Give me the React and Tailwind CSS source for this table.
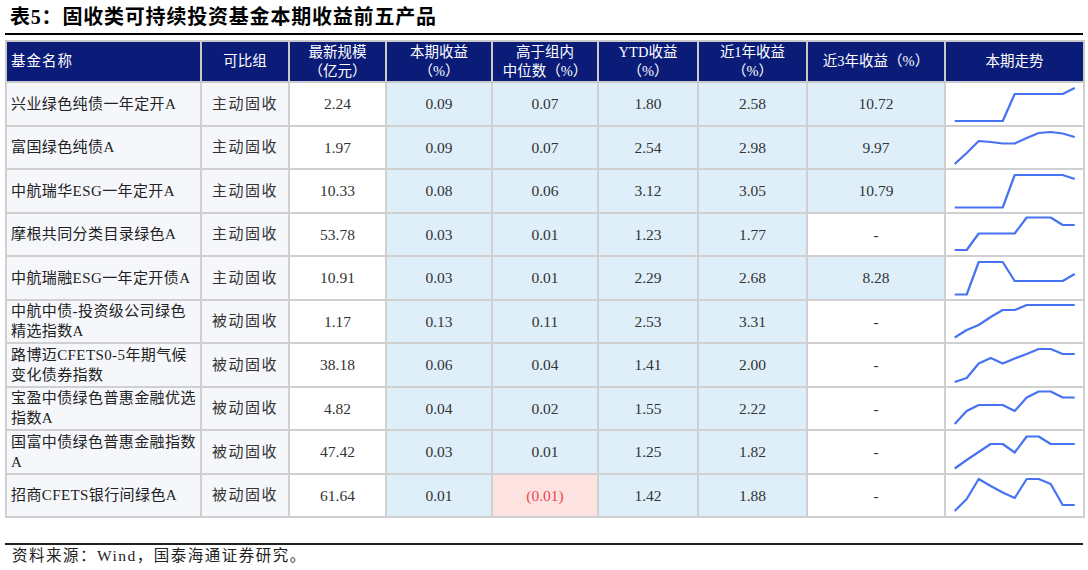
const serif = { fontFamily: '"Liberation Serif", "Noto Sans CJK SC", serif' };

const rows = [
  { name: "兴业绿色纯债一年定开A", group: "主动固收", size: "2.24", cur: "0.09", med: "0.07", ytd: "1.80", y1: "2.58", y3: "10.72", line: [38, 38, 38, 38, 38, 11, 11, 11, 11, 11, 5] },
  { name: "富国绿色纯债A", group: "主动固收", size: "1.97", cur: "0.09", med: "0.07", ytd: "2.54", y1: "2.98", y3: "9.97", line: [38, 27, 15, 16, 17.5, 17.5, 12, 7, 6, 7.5, 11] },
  { name: "中航瑞华ESG一年定开A", group: "主动固收", size: "10.33", cur: "0.08", med: "0.06", ytd: "3.12", y1: "3.05", y3: "10.79", line: [37.5, 37.5, 37.5, 37.5, 37.5, 5, 5, 5, 5, 5, 9] },
  { name: "摩根共同分类目录绿色A", group: "主动固收", size: "53.78", cur: "0.03", med: "0.01", ytd: "1.23", y1: "1.77", y3: "-", line: [37, 37, 20.5, 20.5, 20.5, 20.5, 4.5, 4.5, 4.5, 12, 12] },
  { name: "中航瑞融ESG一年定开债A", group: "主动固收", size: "10.91", cur: "0.03", med: "0.01", ytd: "2.29", y1: "2.68", y3: "8.28", line: [37.5, 37.5, 5, 5, 5, 24, 24, 24, 24, 24, 17] },
  { name: "中航中债-投资级公司绿色精选指数A", group: "被动固收", size: "1.17", cur: "0.13", med: "0.11", ytd: "2.53", y1: "3.31", y3: "-", line: [37.5, 30, 25, 17, 10, 10, 5, 5, 5, 5, 5] },
  { name: "路博迈CFETS0-5年期气候变化债券指数", group: "被动固收", size: "38.18", cur: "0.06", med: "0.04", ytd: "1.41", y1: "2.00", y3: "-", line: [38, 34, 19.5, 14, 19.5, 14.5, 10, 5, 5, 10, 10] },
  { name: "宝盈中债绿色普惠金融优选指数A", group: "被动固收", size: "4.82", cur: "0.04", med: "0.02", ytd: "1.55", y1: "2.22", y3: "-", line: [37, 24, 18, 18, 18, 24, 10.5, 4.5, 4.5, 10.5, 10.5] },
  { name: "国富中债绿色普惠金融指数A", group: "被动固收", size: "47.42", cur: "0.03", med: "0.01", ytd: "1.25", y1: "1.82", y3: "-", line: [37.5, 29, 21, 13, 13, 21.5, 5.5, 5.5, 13, 13, 13] },
  { name: "招商CFETS银行间绿色A", group: "被动固收", size: "61.64", cur: "0.01", med: "(0.01)", ytd: "1.42", y1: "1.88", y3: "-", line: [37, 25, 5, 12, 18.5, 24, 5, 5, 10, 31, 31] },
];

function Spark({ pts }) {
  const d = pts.map((y, i) => `${(8.7 + 12 * i).toFixed(1)},${y - 1}`).join(" ");
  return (
    <svg width="139" height="40" viewBox="0 0 139 40" className="block">
      <polyline points={d} fill="none" stroke="#4672f3" strokeWidth="2.2" strokeLinejoin="round" />
    </svg>
  );
}

const th = "border-2 border-[#c9c9c9] font-normal text-white text-[14.5px] leading-[19px] text-center align-middle p-0";
const td = "border-2 border-[#d0d0d0] text-center align-middle p-0";
const num = "text-[15.5px] text-[#333]";
const blue = "bg-[#deeffa]";

export default function App() {
  return (
    <div className="w-[1088px] h-[570px] bg-white px-[5px] text-[#222]" style={serif}>
      {/* Title */}
      <div className="h-[33px] flex items-center pl-[5px] text-[20px] tracking-[0.8px] font-bold text-black">
        表5：固收类可持续投资基金本期收益前五产品
      </div>
      <div className="h-[2px] bg-black" />

      {/* Table */}
      <table className="mt-[5px] table-fixed border-collapse w-[1078px]">
        <colgroup>
          <col className="w-[195px]" />
          <col className="w-[88px]" />
          <col className="w-[97px]" />
          <col className="w-[106px]" />
          <col className="w-[106px]" />
          <col className="w-[100px]" />
          <col className="w-[109px]" />
          <col className="w-[138px]" />
          <col className="w-[139px]" />
        </colgroup>
        <thead>
          <tr className="h-[41px] bg-[#0a1c78]">
            <th className={`${th} text-left pl-[4px] tracking-[1px]`}>基金名称</th>
            <th className={th}>可比组</th>
            <th className={th}>最新规模<br />（亿元）</th>
            <th className={th}>本期收益<br />（%）</th>
            <th className={th}>高于组内<br />中位数（%）</th>
            <th className={th}>YTD收益<br />（%）</th>
            <th className={th}>近1年收益<br />（%）</th>
            <th className={th}>近3年收益（%）</th>
            <th className={th}>本期走势</th>
          </tr>
        </thead>
        <tbody>
          {rows.map((r, i) => (
            <tr key={i} className="h-[43.5px]">
              <td className={`${td} bg-[#f5f7fb] text-left pl-[4px] pr-[4px] text-[15px] leading-[20px] tracking-[0.4px]`}>
                {r.name}
              </td>
              <td className={`${td} bg-[#f5f7fb] text-[15px] tracking-[1.5px] text-[#333]`}>{r.group}</td>
              <td className={`${td} bg-white ${num}`}>{r.size}</td>
              <td className={`${td} ${blue} ${num}`}>{r.cur}</td>
              {r.med.startsWith("(") ? (
                <td className={`${td} bg-[#fde2e2] text-[15.5px] text-[#ee4747]`}>{r.med}</td>
              ) : (
                <td className={`${td} ${blue} ${num}`}>{r.med}</td>
              )}
              <td className={`${td} ${blue} ${num}`}>{r.ytd}</td>
              <td className={`${td} ${blue} ${num}`}>{r.y1}</td>
              <td className={`${td} ${r.y3 === "-" ? "bg-white" : blue} ${num}`}>{r.y3}</td>
              <td className={`${td} bg-white`}>
                <Spark pts={r.line} />
              </td>
            </tr>
          ))}
        </tbody>
      </table>

      {/* Source */}
      <div className="mt-[25px] h-[1.5px] bg-[#222]" />
      <div className="pl-[7px] pt-[1px] text-[15.5px] leading-[20px] tracking-[1.5px] text-[#222]">
        资料来源：Wind，国泰海通证券研究。
      </div>
    </div>
  );
}
